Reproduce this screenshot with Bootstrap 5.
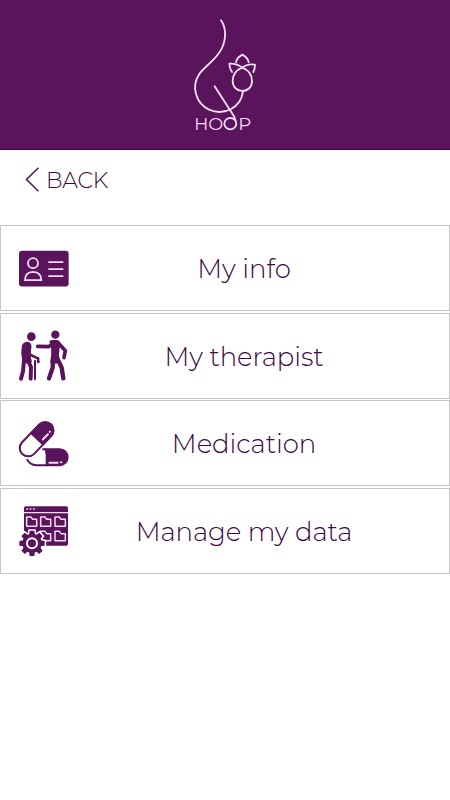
<!DOCTYPE html>
<html lang="en">
<head>
<meta charset="utf-8">
<meta name="viewport" content="width=device-width, initial-scale=1">
<title>HOOP</title>
<link href="https://cdn.jsdelivr.net/npm/bootstrap@5.3.0/dist/css/bootstrap.min.css" rel="stylesheet">
<style>
body{font-family:Montserrat,Inter,"Open Sans",sans-serif;font-weight:300;color:#3d0a45;background:#fff}
.brand-bar{height:150px;background:#5a145c;border-bottom:1px solid #350b3e;padding-top:5px}
.back-row{height:75px;padding:12px 0 0 24px}
.back-link{color:#3d0a45;font-size:22px;line-height:32px;letter-spacing:-.15px;gap:7px}
.back-link span{padding-top:3px}
.menu{gap:1.5px}
.menu-item{height:86px;border:1px solid #c6c6c6;padding-left:9px;color:#3d0a45}
.menu-item:hover{color:#5a145c}
.menu-label{font-size:26px;line-height:36px;padding-top:2px;margin-right:41px;white-space:nowrap;letter-spacing:-.08px}
.logo-text{font-family:Montserrat,Inter,sans-serif;font-weight:400}
</style>
</head>
<body>
<header class="brand-bar d-flex justify-content-center align-items-start">
<svg width="140" height="144" viewBox="0 0 420 432" fill="none" stroke="#f5dcf5" stroke-width="5.5" stroke-linecap="round" stroke-linejoin="round" role="img" aria-label="HOOP">
<path d="M198 46C213 67 215 100 200 131C180 169 151 181 133 207C107 246 123 294 162 314C209 334 258 307 264 259"/>
<path d="M179 244L235 331Q240 338 241 346"/>
<ellipse cx="226" cy="356" rx="18" ry="17"/>
<path d="M262 188C241 196 233 211 233 228C233 246 246 258 262 258C279 258 291 246 291 228C291 211 282 196 262 188Z"/>
<path d="M243 171Q246 158 262 149Q278 158 281 171M231 201Q223 190 223 176Q247 175 262 188Q277 175 300 179Q300 191 295 201"/>
<g class="logo-text" fill="#f5dcf5" stroke="none" font-size="50"><text x="118" y="374" textLength="42" lengthAdjust="spacingAndGlyphs">H</text><text x="160" y="374" textLength="45" lengthAdjust="spacingAndGlyphs">O</text><text x="250" y="374" textLength="39" lengthAdjust="spacingAndGlyphs">P</text></g>
</svg>
</header>
<main>
<div class="back-row">
<a href="#" class="back-link d-inline-flex align-items-center text-decoration-none">
<svg width="15" height="26" viewBox="0 0 15 26" fill="none" stroke="#5a145c" stroke-width="1.6"><path d="M14.5 .7L2.5 12.5L14.5 24.3"/></svg><span>BACK</span></a>
</div>
<nav class="menu d-flex flex-column">
<a href="#" class="menu-item d-flex align-items-center text-decoration-none">
<svg class="flex-shrink-0" width="70" height="65" viewBox="0 -13.5 210 195">
<rect x="27" y="31" width="149" height="107" rx="9" fill="#5a145c"/>
<g fill="none" stroke="#f5dcf5" stroke-width="5.5"><circle cx="69" cy="68" r="15"/><path d="M45 119Q45 95 69 94Q94 95 94 119Z" stroke-linejoin="round"/><path d="M115 65H160M115 86H160M115 107H160"/></g>
</svg><span class="menu-label flex-grow-1 text-center">My info</span></a>
<a href="#" class="menu-item d-flex align-items-center text-decoration-none">
<svg class="flex-shrink-0" width="70" height="65" viewBox="0 -6 210 195" fill="none" stroke="#5a145c" stroke-linecap="round" stroke-linejoin="round">
<g fill="#5a145c" stroke="none"><circle cx="64" cy="35" r="13"/><circle cx="136" cy="29" r="12.5"/></g>
<path fill="#5a145c" stroke-width="7" d="M39 63Q43 54 53 54Q60 55 61 64L58 92L62 110L53 113L40 106Q35 84 39 63ZM122 50Q133 45 145 50Q148 55 146 63L143 92L149 112L124 112L127 90L127 66Z"/>
<path stroke-width="12" d="M42 106L39 139L33 161M55 109L63 126L62 161"/>
<path stroke-width="8" d="M53 71L56 87L79 98"/>
<path stroke-width="6" d="M75 107V163"/>
<path stroke-width="8" d="M84 99L85 111"/>
<path stroke-width="11" d="M83 64L117 65L129 54M145 54L166 77L162 98"/>
<path stroke-width="13" d="M129 108L128 128L117 160M145 107L155 128L160 160"/>
</svg><span class="menu-label flex-grow-1 text-center">My therapist</span></a>
<a href="#" class="menu-item d-flex align-items-center text-decoration-none">
<svg class="flex-shrink-0" width="70" height="65" viewBox="0 1.5 210 195">
<g transform="translate(80 86) rotate(-46)">
<rect x="-62" y="-25" width="124" height="50" rx="25" fill="#fff" stroke="#5a145c" stroke-width="6"/>
<path d="M-1 -27H35A27 27 0 0 1 35 27H-1Z" fill="#5a145c"/>
<path d="M12 14H34M43 13H44" fill="none" stroke="#f5dcf5" stroke-width="6" stroke-linecap="round"/>
</g>
<path d="M104 113H149A27 27 0 0 1 149 167H107V135Z" fill="#5a145c"/>
<path d="M97 116H108M51 146Q59 164 79 164H110" fill="none" stroke="#5a145c" stroke-width="6"/>
<path d="M118 157H143M153 155H154" fill="none" stroke="#f5dcf5" stroke-width="6" stroke-linecap="round"/>
</svg><span class="menu-label flex-grow-1 text-center">Medication</span></a>
<a href="#" class="menu-item d-flex align-items-center text-decoration-none">
<svg class="flex-shrink-0" width="70" height="65" viewBox="0 9 210 195">
<defs><g id="gear"><circle r="29"/><path id="teeth" d="M-9 -25L-7 -38H7L9 -25V25L7 38H-7L-9 25Z"/><use href="#teeth" transform="rotate(45)"/><use href="#teeth" transform="rotate(90)"/><use href="#teeth" transform="rotate(135)"/></g></defs>
<rect x="42" y="34" width="132" height="118" rx="5" fill="#5a145c"/>
<path d="M42 53H174" stroke="#f5dcf5" stroke-width="4"/>
<path d="M49 42H54M59 42H64M69 42H74" stroke="#f5dcf5" stroke-width="4"/>
<g fill="none" stroke="#f5dcf5" stroke-width="4.5" stroke-linejoin="round">
<path d="M50 66H63L68 73H80V94H50ZM92 66H105L110 73H122V94H92ZM135 66H148L153 73H166V94H135ZM92 109H105L110 116H122V137H92ZM135 109H148L153 116H166V137H135Z"/></g>
<g transform="translate(66 145)">
<use href="#gear" fill="#fff" stroke="#fff" stroke-width="9"/>
<use href="#gear" fill="#5a145c"/>
<circle r="15" fill="none" stroke="#fff" stroke-width="6"/>
</g>
</svg><span class="menu-label flex-grow-1 text-center">Manage my data</span></a>
</nav>
</main>
<script src="https://cdn.jsdelivr.net/npm/bootstrap@5.3.0/dist/js/bootstrap.bundle.min.js"></script>
</body>
</html>
